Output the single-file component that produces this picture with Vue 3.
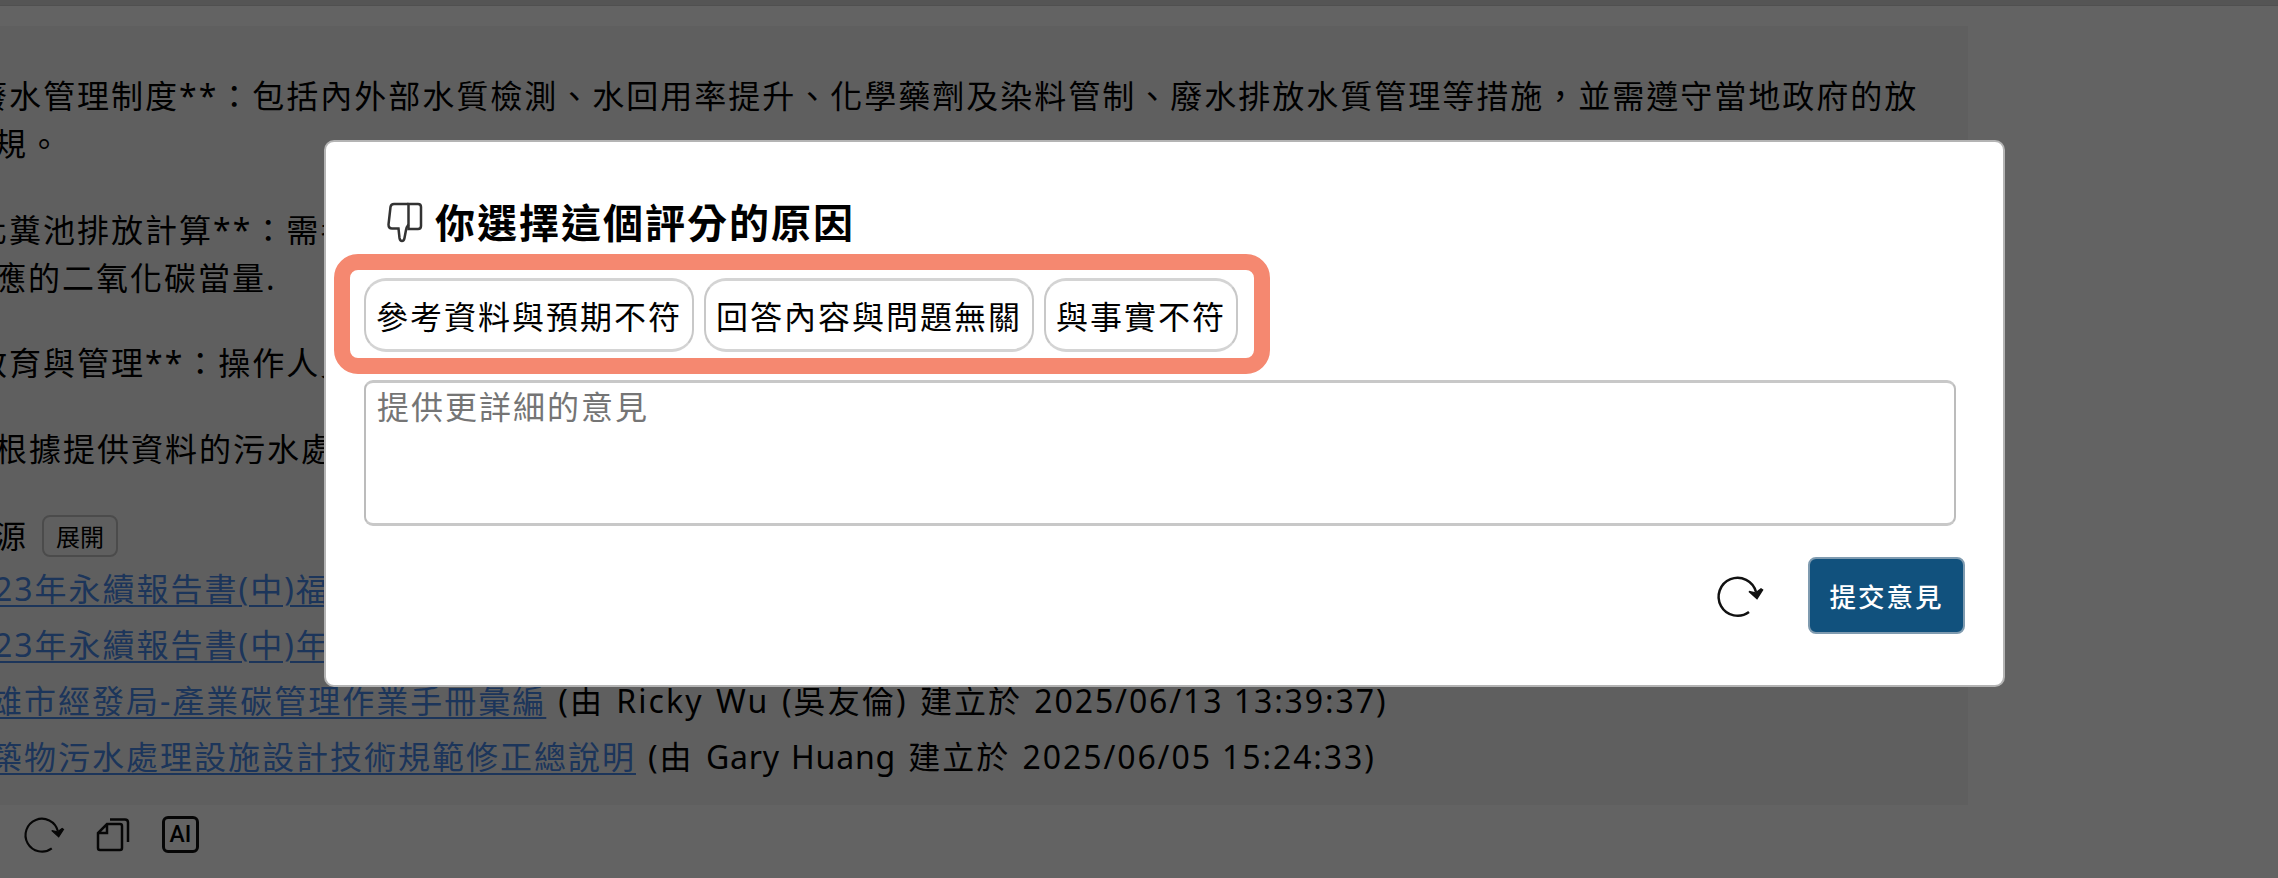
<!--
  App.vue — 問答頁面與「評分原因」回饋視窗
  底層是 AI 回答內容，上層是半透明遮罩與回饋表單
-->

<template>
  <div class="page">
    <div class="top-line"></div>

    <!-- AI 回答內容 -->
    <div class="answer">
      <div v-for="(lines, i) in paragraphs" :key="i" class="paragraph">
        <div v-for="line in lines" :key="line.text" class="line" :style="{ marginLeft: line.offset + 'px' }">{{ line.text }}</div>
      </div>

      <div class="source-head">
        <span class="source-title">源</span>
        <button class="expand">展開</button>
      </div>

      <!-- 參考來源連結 -->
      <div v-for="item in sources" :key="item.link" class="source" :style="{ marginLeft: item.offset + 'px' }">
        <a>{{ item.link }}</a>
        <span v-if="item.author" class="meta">(由 <span :style="{ letterSpacing: item.spacing + 'px' }">{{ item.author }}</span> 建立於 <span class="time">{{ item.time }})</span></span>
      </div>
    </div>

    <!-- 回答下方的工具圖示 -->
    <div class="tools">
      <svg class="tool-redo" viewBox="0 0 44 40">
        <path d="M31 36 A19 19 0 1 1 38 16" />
        <path class="fill" d="M31 15.5 L37.500 17 L43 13 L44.500 14 L39 22.500 Z" />
      </svg>
      <svg class="tool-copy" viewBox="0 0 32 34">
        <path d="M10 6 H23 Q25 6 25 8 V30 Q25 32 23 32 H3 Q1 32 1 30 V15 Z M10 6 V15 H1" />
        <path d="M13 1.5 H28 Q31 1.5 31 4.5 V24" />
      </svg>
      <div class="tool-ai">AI</div>
    </div>

    <!-- 遮罩與回饋視窗 -->
    <div class="mask">
      <div class="dialog">
        <div class="title">
          <svg class="thumb" viewBox="0 0 36 42">
            <path d="M21.500 2 H7 Q4 2 3.500 5 L1.500 22.500 Q1.500 26.500 5 26.500 H11.500 L12.500 36 Q13 39 15 39 Q17 39 17.500 36 L19 28 Q19.500 25 21.500 22.500" />
            <path d="M21.500 2 H31 Q34 2 34 5 V24 Q34 27 31 27 H21.500 Z" />
          </svg>
          <h2>你選擇這個評分的原因</h2>
        </div>

        <div class="reasons">
          <button v-for="r in reasons" :key="r" class="reason">{{ r }}</button>
        </div>

        <textarea class="comment" placeholder="提供更詳細的意見"></textarea>

        <div class="actions">
          <svg class="reset" viewBox="0 0 44 40">
            <path d="M31 36 A19 19 0 1 1 38 16" />
            <path class="fill" d="M31 15.5 L37.500 17 L43 13 L44.500 14 L39 22.500 Z" />
          </svg>
          <button class="submit">提交意見</button>
        </div>

        <!-- 強調原因選項的外框 -->
        <div class="highlight"></div>
      </div>
    </div>
  </div>
</template>

<script setup>
/** 回答段落，offset 為每行捲出畫面左側的距離 */
const paragraphs = [
  [
    { text: '廢水管理制度**：包括內外部水質檢測、水回用率提升、化學藥劑及染料管制、廢水排放水質管理等措施，並需遵守當地政府的放', offset: -25 },
    { text: '規。', offset: -6 }
  ],
  [
    { text: '化糞池排放計算**：需考慮', offset: -25 },
    { text: '應的二氧化碳當量.', offset: -6 }
  ],
  [{ text: '教育與管理**：操作人員', offset: -25 }],
  [{ text: '根據提供資料的污水處理', offset: -5 }]
]

/** 參考來源，spacing 為建立者名稱的字距 */
const sources = [
  { link: '23年永續報告書(中)福懋', offset: -6 },
  { link: '23年永續報告書(中)年報', offset: -6 },
  { link: '雄市經發局-產業碳管理作業手冊彙編', author: 'Ricky Wu (吳友倫)', time: '2025/06/13 13:39:37', spacing: 2.1, offset: -10 },
  { link: '築物污水處理設施設計技術規範修正總說明', author: 'Gary Huang', time: '2025/06/05 15:24:33', spacing: 0.8, offset: -10 }
]

/** 評分原因選項 */
const reasons = ['參考資料與預期不符', '回答內容與問題無關', '與事實不符']
</script>

<style>
body {
  margin: 0;
}
</style>

<style scoped>
* {
  box-sizing: border-box;
}

.page {
  position: relative;
  width: 100%;
  height: 878px;
  overflow: hidden;
  background: #f8f8f8;
  color: #000;
  font-family: "Noto Sans", "Noto Sans CJK TC", sans-serif;
  font-size: 32px;
  letter-spacing: 2px;
}

button,
textarea {
  font-family: inherit;
  letter-spacing: inherit;
}

.top-line {
  height: 6px;
  background: #d4d4d4;
  border-bottom: 1px solid #c8c8c8;
}

/* ---------- 回答區塊 ---------- */
.answer {
  width: 1968px;
  height: 779px;
  margin-top: 20px;
  padding-top: 46px;
  background: #eee;
  overflow: hidden;
}

.paragraph {
  margin-bottom: 37.5px;
}

.line {
  height: 48px;
  line-height: 48px;
  white-space: nowrap;
}

.source-head {
  display: flex;
  align-items: center;
  height: 51px;
}

.source-title {
  margin: -4px 0 0 -6px;
}

.expand {
  width: 76px;
  height: 42px;
  margin-left: 14px;
  padding: 0;
  border: 2px solid #bbb;
  border-radius: 8px;
  background: transparent;
  font-size: 24px;
  letter-spacing: 0;
}

.source {
  height: 56px;
  line-height: 56px;
  white-space: nowrap;
}

.source a {
  color: #4784e0;
  text-decoration: underline;
  text-decoration-thickness: 2px;
  text-underline-offset: 4px;
}

.meta {
  margin-left: 12px;
  word-spacing: 2px;
}

.time {
  letter-spacing: 1.9px;
  word-spacing: 0;
}

/* ---------- 工具圖示 ---------- */
.tools {
  display: flex;
  align-items: center;
  padding: 11px 0 0 25px;
}

.tools svg,
.reset,
.thumb {
  fill: none;
  stroke: #111;
  stroke-width: 2.5;
  overflow: visible;
}

.thumb {
  stroke: #333;
}

.tools .fill,
.reset .fill {
  fill: #111;
  stroke-width: 1.5;
}

.tool-redo {
  width: 38px;
  height: 35px;
}

.tool-copy {
  width: 32px;
  height: 34px;
  margin-left: 34px;
}

.tool-ai {
  width: 37px;
  height: 37px;
  margin-left: 33px;
  border: 3px solid #111;
  border-radius: 6px;
  font: 500 23px/32px Roboto, sans-serif;
  letter-spacing: 0;
  text-align: center;
}

/* ---------- 遮罩與視窗 ---------- */
.mask {
  position: absolute;
  inset: 0;
  background: rgba(0, 0, 0, 0.6);
}

.dialog {
  position: absolute;
  left: 324px;
  top: 140px;
  width: 1681px;
  height: 547px;
  padding: 50px 38px 0;
  border: 2px solid #b4b4b4;
  border-radius: 10px;
  background: #fff;
}

.title {
  display: flex;
  align-items: center;
  height: 62px;
  padding-left: 23px;
}

.thumb {
  width: 36px;
  height: 42px;
  margin-right: 12px;
}

.title h2 {
  margin: 0;
  font-size: 40px;
  line-height: 62px;
}

.reasons {
  display: flex;
  gap: 10px;
  margin-top: 24px;
}

.reason {
  height: 74px;
  padding: 0 10px;
  border: solid;
  border-width: 3px 2px;
  border-color: #d4d4d4 #c8c8c8;
  border-radius: 22px;
  background: #fff;
  color: #000;
  font-size: 32px;
}

.comment {
  display: block;
  width: 1592px;
  height: 146px;
  margin-top: 28px;
  padding: 1px 11px;
  border: solid;
  border-width: 3px 2px;
  border-color: #c8c8c8 #bcbcbc;
  border-radius: 9px;
  resize: none;
  font-size: 32px;
  line-height: 46px;
}

.comment::placeholder {
  color: #757575;
}

.actions {
  display: flex;
  align-items: center;
  justify-content: flex-end;
  margin-top: 31px;
}

.reset {
  width: 44px;
  height: 40px;
  margin-right: 46px;
}

.submit {
  width: 157px;
  height: 77px;
  padding: 0;
  border: 2px solid #7f9bb0;
  border-radius: 8px;
  background: #11517d;
  color: #fff;
  font-size: 26.5px;
  font-weight: 500;
}

/* ---------- 強調外框 ---------- */
.highlight {
  position: absolute;
  left: 8px;
  top: 112px;
  width: 936px;
  height: 120px;
  border: 16px solid #f58870;
  border-radius: 24px;
  pointer-events: none;
}
</style>
